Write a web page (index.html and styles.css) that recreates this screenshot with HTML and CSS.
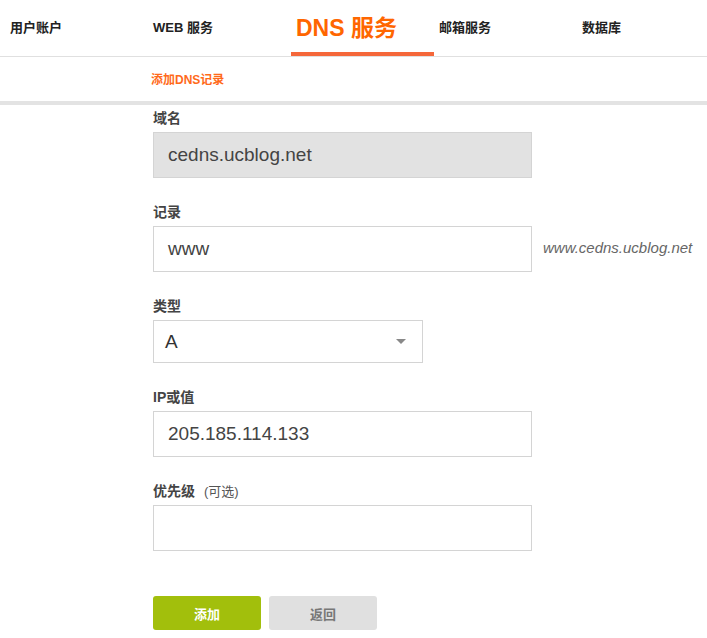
FILE: index.html
```html
<!DOCTYPE html>
<html lang="zh-CN">
<head>
<meta charset="utf-8">
<title>DNS 服务</title>
<link rel="stylesheet" href="styles.css">
</head>
<body>
<header class="nav">
  <a class="nav-item">用户账户</a>
  <a class="nav-item">WEB 服务</a>
  <a class="nav-item active">DNS 服务</a>
  <a class="nav-item">邮箱服务</a>
  <a class="nav-item">数据库</a>
</header>
<div class="subnav">
  <a class="sub-item">添加DNS记录</a>
</div>
<div class="divider"></div>
<form class="form">
  <div class="field">
    <label class="label">域名</label>
    <div class="input readonly">cedns.ucblog.net</div>
  </div>
  <div class="field">
    <label class="label">记录</label>
    <div class="row">
      <div class="input">www</div>
      <span class="hint">www.cedns.ucblog.net</span>
    </div>
  </div>
  <div class="field">
    <label class="label">类型</label>
    <div class="select"><span>A</span><span class="caret"></span></div>
  </div>
  <div class="field">
    <label class="label">IP或值</label>
    <div class="input">205.185.114.133</div>
  </div>
  <div class="field">
    <label class="label">优先级<span class="opt">(可选)</span></label>
    <div class="input"></div>
  </div>
  <div class="buttons">
    <button type="button" class="btn primary">添加</button>
    <button type="button" class="btn secondary">返回</button>
  </div>
</form>
</body>
</html>
```
FILE: styles.css
```css
* { box-sizing: border-box; }
body {
  margin: 0;
  font-family: "Liberation Sans", "Noto Sans CJK SC", sans-serif;
  color: #333;
  background: #fff;
}
.nav {
  display: flex;
  height: 57px;
  padding-left: 5px;
  border-bottom: 1px solid #e0e0e0;
  overflow: hidden;
}
.nav-item {
  flex: 0 0 143px;
  height: 56px;
  padding-left: 5px;
  font-size: 13px;
  font-weight: bold;
  color: #222;
  line-height: 55px;
  border-bottom: 4px solid transparent;
  white-space: nowrap;
}
.nav-item.active {
  font-size: 23px;
  color: #ff6600;
  padding-top: 4px;
  line-height: 48px;
  border-bottom-color: #f5673a;
}
.subnav {
  height: 44px;
  padding-left: 151px;
  display: flex;
  align-items: center;
}
.sub-item {
  font-size: 12px;
  font-weight: bold;
  color: #ff6a1a;
  margin-top: -2px;
}
.divider {
  height: 4px;
  background: #e3e3e3;
}
.form {
  padding-left: 153px;
  padding-top: 3px;
}
.label {
  display: block;
  font-size: 14px;
  font-weight: bold;
  color: #444;
  height: 24px;
  line-height: 20px;
  white-space: nowrap;
}
.opt {
  font-size: 13px;
  font-weight: normal;
  color: #555;
  margin-left: 9px;
}
.input {
  width: 379px;
  height: 46px;
  border: 1px solid #d4d4d4;
  padding-left: 14px;
  font-size: 19px;
  color: #444;
  line-height: 44px;
  margin-bottom: 24px;
  background: #fff;
}
.input.readonly { background: #e2e2e2; }
.row { display: flex; align-items: flex-start; }
.hint {
  margin-left: 11px;
  font-size: 15px;
  font-style: italic;
  color: #666;
  line-height: 44px;
}
.select {
  width: 270px;
  height: 43px;
  border: 1px solid #d4d4d4;
  padding: 0 16px 0 11px;
  display: flex;
  align-items: center;
  justify-content: space-between;
  font-size: 19px;
  color: #333;
  margin-bottom: 24px;
}
.caret {
  width: 0; height: 0;
  border-left: 5px solid transparent;
  border-right: 5px solid transparent;
  border-top: 5px solid #888;
}
.buttons {
  display: flex;
  gap: 8px;
  margin-top: 45px;
}
.btn {
  width: 108px;
  height: 34px;
  border: none;
  border-radius: 3px;
  font-family: "Liberation Sans", "Noto Sans CJK SC", sans-serif;
  font-size: 13px;
  font-weight: bold;
}
.btn.primary { background: #a2bf0c; color: #fff; }
.btn.secondary { background: #e0e0e0; color: #777; }
```
